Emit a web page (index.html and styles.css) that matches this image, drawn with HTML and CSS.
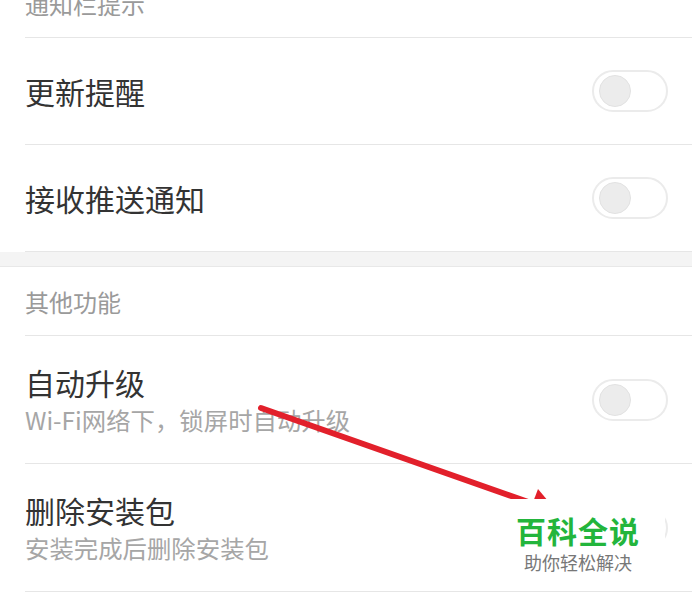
FILE: index.html
```html
<!DOCTYPE html>
<html>
<head>
  <meta charset="UTF-8">
  <title>设置</title>
  <link rel="stylesheet" href="styles.css">
</head>
<body>
  <div class="page">
    <div class="settings">
      <!-- 通知栏提示 -->
      <div class="sectionHead">通知栏提示</div>
      <div class="row">
        <div class="rowText">
          <div class="rowTitle">更新提醒</div>
        </div>
        <span class="switch"></span>
      </div>
      <div class="row">
        <div class="rowText">
          <div class="rowTitle">接收推送通知</div>
        </div>
        <span class="switch"></span>
      </div>

      <div class="gap"></div>

      <!-- 其他功能 -->
      <div class="sectionHead">其他功能</div>
      <div class="row tall">
        <div class="rowText">
          <div class="rowTitle">自动升级</div>
          <div class="rowSub">Wi-Fi网络下<span class="comma">，</span>锁屏时自动升级</div>
        </div>
        <span class="switch"></span>
      </div>
      <div class="row tall">
        <div class="rowText">
          <div class="rowTitle">删除安装包</div>
          <div class="rowSub">安装完成后删除安装包</div>
        </div>
        <span class="switch"></span>
      </div>
    </div>

    <!-- annotation arrow drawn over the screenshot -->
    <svg class="arrow" width="692" height="606" viewBox="0 0 692 606">
      <line x1="261" y1="408" x2="534" y2="504" stroke="#e2202b" stroke-width="6" stroke-linecap="round" />
      <polygon points="538,489 559,514 527,518" fill="#e2202b" />
    </svg>

    <div class="watermark">
      <div class="wmTitle">百科全说</div>
      <div class="wmSub">助你轻松解决</div>
    </div>
  </div>
</body>
</html>
```

FILE: styles.css
```css
body {
  margin: 0;
  padding: 0;
  background: #fff;
  font-family: "Noto Sans CJK SC", "Noto Sans", sans-serif;
  overflow: hidden;
}

.page {
  position: relative;
  width: 692px;
  height: 606px;
  overflow: hidden;
}

.settings {
  margin-top: -31px; /* list is scrolled a bit */
}

.sectionHead {
  height: 68px;
  display: flex;
  align-items: center;
  margin-left: 25px;
  border-bottom: 1px solid #e6e6e6;
  font-size: 24px;
  color: #9a9a9a;
}

.row {
  height: 106px;
  display: flex;
  align-items: center;
  margin-left: 25px;
  padding-right: 24px;
  border-bottom: 1px solid #e6e6e6;
}

.row.tall {
  height: 127px;
}

.rowText {
  flex: 1;
}

.tall .rowText {
  padding-top: 3px;
}

.rowTitle {
  font-size: 30px;
  line-height: 36px;
  color: #333;
}

.rowSub {
  margin-top: 2px;
  font-size: 24.4px;
  line-height: 36px;
  color: #a6a6a6;
}

.comma {
  letter-spacing: -7px;
  margin-right: 7px;
}

.gap {
  height: 14px;
  background: #f4f4f4;
  border-bottom: 1px solid #e8e8e8;
}

.switch {
  position: relative;
  width: 72px;
  height: 38px;
  border: 2px solid #ebebeb;
  border-radius: 21px;
  background: #fff;
  box-sizing: content-box;
}

.switch::after {
  content: "";
  position: absolute;
  left: 5px;
  top: 3px;
  width: 30px;
  height: 30px;
  border-radius: 50%;
  background: #ececec;
  border: 1px solid #e2e2e2;
}

.arrow {
  position: absolute;
  left: 0;
  top: 0;
}

.watermark {
  position: absolute;
  left: 505px;
  top: 499px;
  width: 160px;
  height: 85px;
  background: #fff;
  display: flex;
  flex-direction: column;
  align-items: center;
  padding-top: 13px;
  padding-right: 14px;
  box-sizing: border-box;
}

.wmTitle {
  font-size: 30px;
  line-height: 36px;
  font-weight: bold;
  color: #23b53c;
  letter-spacing: 1px;
}

.wmSub {
  margin-top: 4px;
  font-size: 18px;
  line-height: 20px;
  color: #777;
}
```
